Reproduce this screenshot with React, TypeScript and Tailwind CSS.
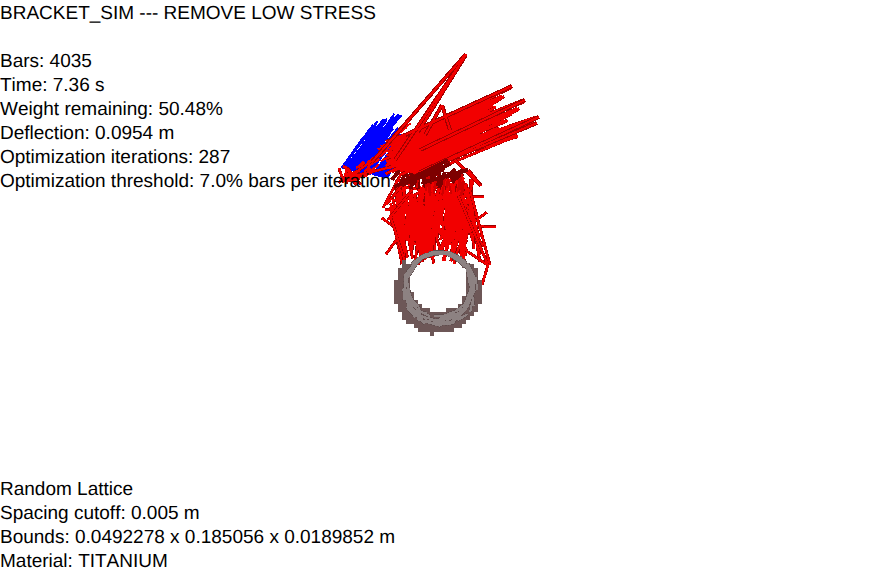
import React from "react";

type Seg = [number, number, number, number];

function rng(seed: number) {
  let a = seed;
  return () => {
    a = (a + 0x6d2b79f5) | 0;
    let t = Math.imul(a ^ (a >>> 15), 1 | a);
    t = (t + Math.imul(t ^ (t >>> 7), 61 | t)) ^ t;
    return ((t ^ (t >>> 14)) >>> 0) / 4294967296;
  };
}

function lerp(a: number, b: number, t: number) {
  return a + (b - a) * t;
}

const blue: Seg[] = [];
const redFan: Seg[] = [];
const redLower: Seg[] = [];
const darkCore: Seg[] = [];
const coreBright: Seg[] = [];
const ringLines: Seg[] = [];
const ringCells: [number, number][] = [];
const specks: Seg[] = [];

(() => {
  const r = rng(23);
  // blue fan: loose bars rising to a toothed edge
  for (let i = 0; i < 110; i++) {
    const t = r();
    const sx = 341 + 46 * t;
    const sy = 168 + 10 * t;
    const top = t < 0.3 ? 122 - t * 30 : 113 + (t - 0.3) * 70;
    const tooth = r();
    const ey = top + (tooth < 0.3 ? 0 : tooth * tooth * 30);
    blue.push([sx, sy, sx + (sy - ey) * lerp(0.68, 0.82, r()), ey]);
  }
  // red patches scattered across the blue
  for (let i = 0; i < 34; i++) {
    const x = lerp(356, 402, r());
    const y = lerp(172, 132, (x - 356) / 46) + lerp(-5, 12, r());
    specks.push([x, y, x + 3 + r() * 8, y - 2 - r() * 6]);
  }
  // fill of the fan body
  for (let i = 0; i < 130; i++) {
    const v = r();
    const sx = lerp(385, 420, r());
    const sy = lerp(140, 172, v) + lerp(-3, 3, r());
    const ex = lerp(430, 492, r());
    redFan.push([sx, sy, ex, lerp(122, 148, v) - ((ex - 430) / 62) * 22 + lerp(-2, 2, r())]);
  }
  // separate long bars out to the tips
  const tips: [number, number][] = [
    [512, 86], [525, 100], [496, 105], [512, 113], [539, 117], [537, 123], [518, 135],
    [505, 96], [520, 108], [530, 120], [508, 120], [500, 128], [490, 110],
  ];
  for (let i = 0; i < 78; i++) {
    const tip = tips[i % tips.length];
    const v = (tip[1] - 86) / 49;
    const sx = lerp(395, 425, r());
    redFan.push([sx, lerp(142, 172, v) + lerp(-4, 4, r()), tip[0] - r() * 5, tip[1] + r() * 2]);
  }
  // base triangle at the far left
  for (let i = 0; i < 22; i++) {
    redFan.push([lerp(338, 350, r()), lerp(166, 184, r()), lerp(342, 362, r()), lerp(170, 186, r())]);
  }
  redFan.push([345, 178, 400, 165], [350, 176, 385, 152]);
  // lower body: struts plus small fans
  for (let i = 0; i < 150; i++) {
    const y0 = lerp(178, 222, r());
    const x0 = lerp(y0 > 200 ? 390 : 396, 474, r());
    const x1 = Math.max(402, Math.min(480, x0 + lerp(-16, 16, r())));
    const y1 = lerp(Math.max(y0 + 14, 226), 265, r());
    const mx = (x0 + x1) / 2;
    if (Math.abs(mx - 442) < 3 && y0 > 195) continue;
    redLower.push([x0, y0, x1, y1]);
  }
  const nodes: [number, number][] = [
    [402, 232], [416, 206], [432, 222], [452, 214], [468, 226], [424, 190], [458, 196],
  ];
  for (let i = 0; i < 70; i++) {
    const n = nodes[i % nodes.length];
    const ang = r() * Math.PI * 2;
    const len = 12 + r() * 20;
    redLower.push([n[0], n[1], n[0] + Math.cos(ang) * len, Math.min(264, n[1] + Math.sin(ang) * len)]);
  }
  // dark core
  for (let i = 0; i < 24; i++) {
    const x = lerp(398, 462, r());
    darkCore.push([x, lerp(166, 176, r()), x + lerp(-12, 12, r()), lerp(176, 190, r())]);
  }
  for (let i = 0; i < 14; i++) {
    const x = lerp(412, 466, r());
    coreBright.push([x, lerp(174, 182, r()), x + lerp(-5, 5, r()), lerp(188, 196, r())]);
  }
  // ring
  const cx = 438;
  const cy = 290;
  for (let y = 248; y < 334; y += 4) {
    for (let x = 394; x < 484; x += 4) {
      const d = Math.hypot(x + 2 - cx, y + 2 - cy);
      const hole = Math.hypot(x + 2 - 439, y + 2 - 283);
      const wobble = r() * 2 - 1;
      if (d + wobble < 44 && hole + wobble > 28 && !(y < 262 && Math.abs(x - 439) < 36)) ringCells.push([x, y]);
    }
  }
  for (let i = 0; i < 135; i++) {
    const a = r() * Math.PI * 2;
    const b = a + 0.3 + r() * 0.35;
    const p = (ang: number, rad: number): [number, number] => {
      const gx = 440 + Math.cos(ang) * 38;
      const gy = 289 + Math.sin(ang) * 38;
      const hx = 439 + Math.cos(ang) * 31;
      const hy = 284 + Math.sin(ang) * 31;
      return [lerp(hx, gx, rad), lerp(hy, gy, rad)];
    };
    const s = p(a, r());
    const e = p(b, r());
    ringLines.push([s[0], s[1], e[0], e[1]]);
  }
})();

function Lines({ segs, color, width }: { segs: Seg[]; color: string; width: number }) {
  return (
    <g stroke={color} strokeWidth={width}>
      {segs.map((s, i) => (
        <line key={i} x1={s[0]} y1={s[1]} x2={s[2]} y2={s[3]} />
      ))}
    </g>
  );
}

const spikes: Seg[] = [
  [372, 162, 466, 54],
  [395, 160, 466, 55],
  [418, 132, 464, 58],
  [405, 135, 512, 86],
  [420, 172, 539, 117],
  [425, 170, 537, 123],
  [420, 150, 525, 100],
  [455, 160, 481, 186],
  [468, 170, 481, 186],
  [442, 105, 425, 135],
  [442, 105, 450, 130],
];

const lowerEdges: Seg[] = [
  [458, 195, 488, 265],
  [470, 190, 490, 265],
  [488, 265, 468, 252],
  [488, 265, 482, 285],
  [400, 176, 383, 208],
  [410, 175, 386, 205],
  [390, 215, 405, 262],
  [388, 220, 412, 190],
];

const coreSlant: Seg[] = [
  [394, 187, 448, 160],
  [402, 185, 450, 164],
  [425, 182, 468, 170],
];

function Truss() {
  return (
    <svg
      className="absolute inset-0"
      width={878}
      height={573}
      viewBox="0 0 878 573"
      fill="none"
      shapeRendering="crispEdges"
    >
      <Lines segs={blue} color="#0000ff" width={2} />
      <Lines segs={redLower} color="#980000" width={3} />
      <Lines segs={redLower} color="#f20000" width={2} />
      <Lines segs={lowerEdges} color="#a00000" width={3} />
      <Lines segs={lowerEdges} color="#f20000" width={2} />
      <Lines segs={darkCore} color="#7d0000" width={4} />
      <Lines segs={coreBright} color="#d00000" width={2} />
      <Lines segs={redFan} color="#a00000" width={3} />
      <Lines segs={redFan} color="#f20000" width={2} />
      <Lines segs={specks} color="#f00000" width={2} />
      <Lines segs={spikes} color="#a00000" width={4} />
      <Lines segs={spikes} color="#f20000" width={2} />
      <Lines segs={coreSlant} color="#7d0000" width={4} />
      <g fill="#6d5757">
        {ringCells.map(([x, y], i) => (
          <rect key={i} x={x} y={y} width={4} height={4} />
        ))}
      </g>
      <Lines segs={ringLines} color="#5f4e4e" width={3} />
      <Lines segs={ringLines} color="#8d8282" width={2} />
    </svg>
  );
}

export default function App() {
  return (
    <div className="relative w-[878px] h-[573px] overflow-hidden bg-white font-['Liberation_Sans',Arial,sans-serif] text-[19px] leading-6 text-black [text-rendering:geometricPrecision] [font-kerning:none]">
      <Truss />
      <div className="relative flex h-[574px] flex-col justify-between pt-0.5">
        <div>
          <div className="mb-6">BRACKET_SIM --- REMOVE LOW STRESS</div>
          <div>Bars: 4035</div>
          <div>Time: 7.36 s</div>
          <div>Weight remaining: 50.48%</div>
          <div>Deflection: 0.0954 m</div>
          <div>Optimization iterations: 287</div>
          <div>Optimization threshold: 7.0% bars per iteration</div>
        </div>
        <div>
          <div>Random Lattice</div>
          <div>Spacing cutoff: 0.005 m</div>
          <div>Bounds: 0.0492278 x 0.185056 x 0.0189852 m</div>
          <div>Material: TITANIUM</div>
        </div>
      </div>
    </div>
  );
}
